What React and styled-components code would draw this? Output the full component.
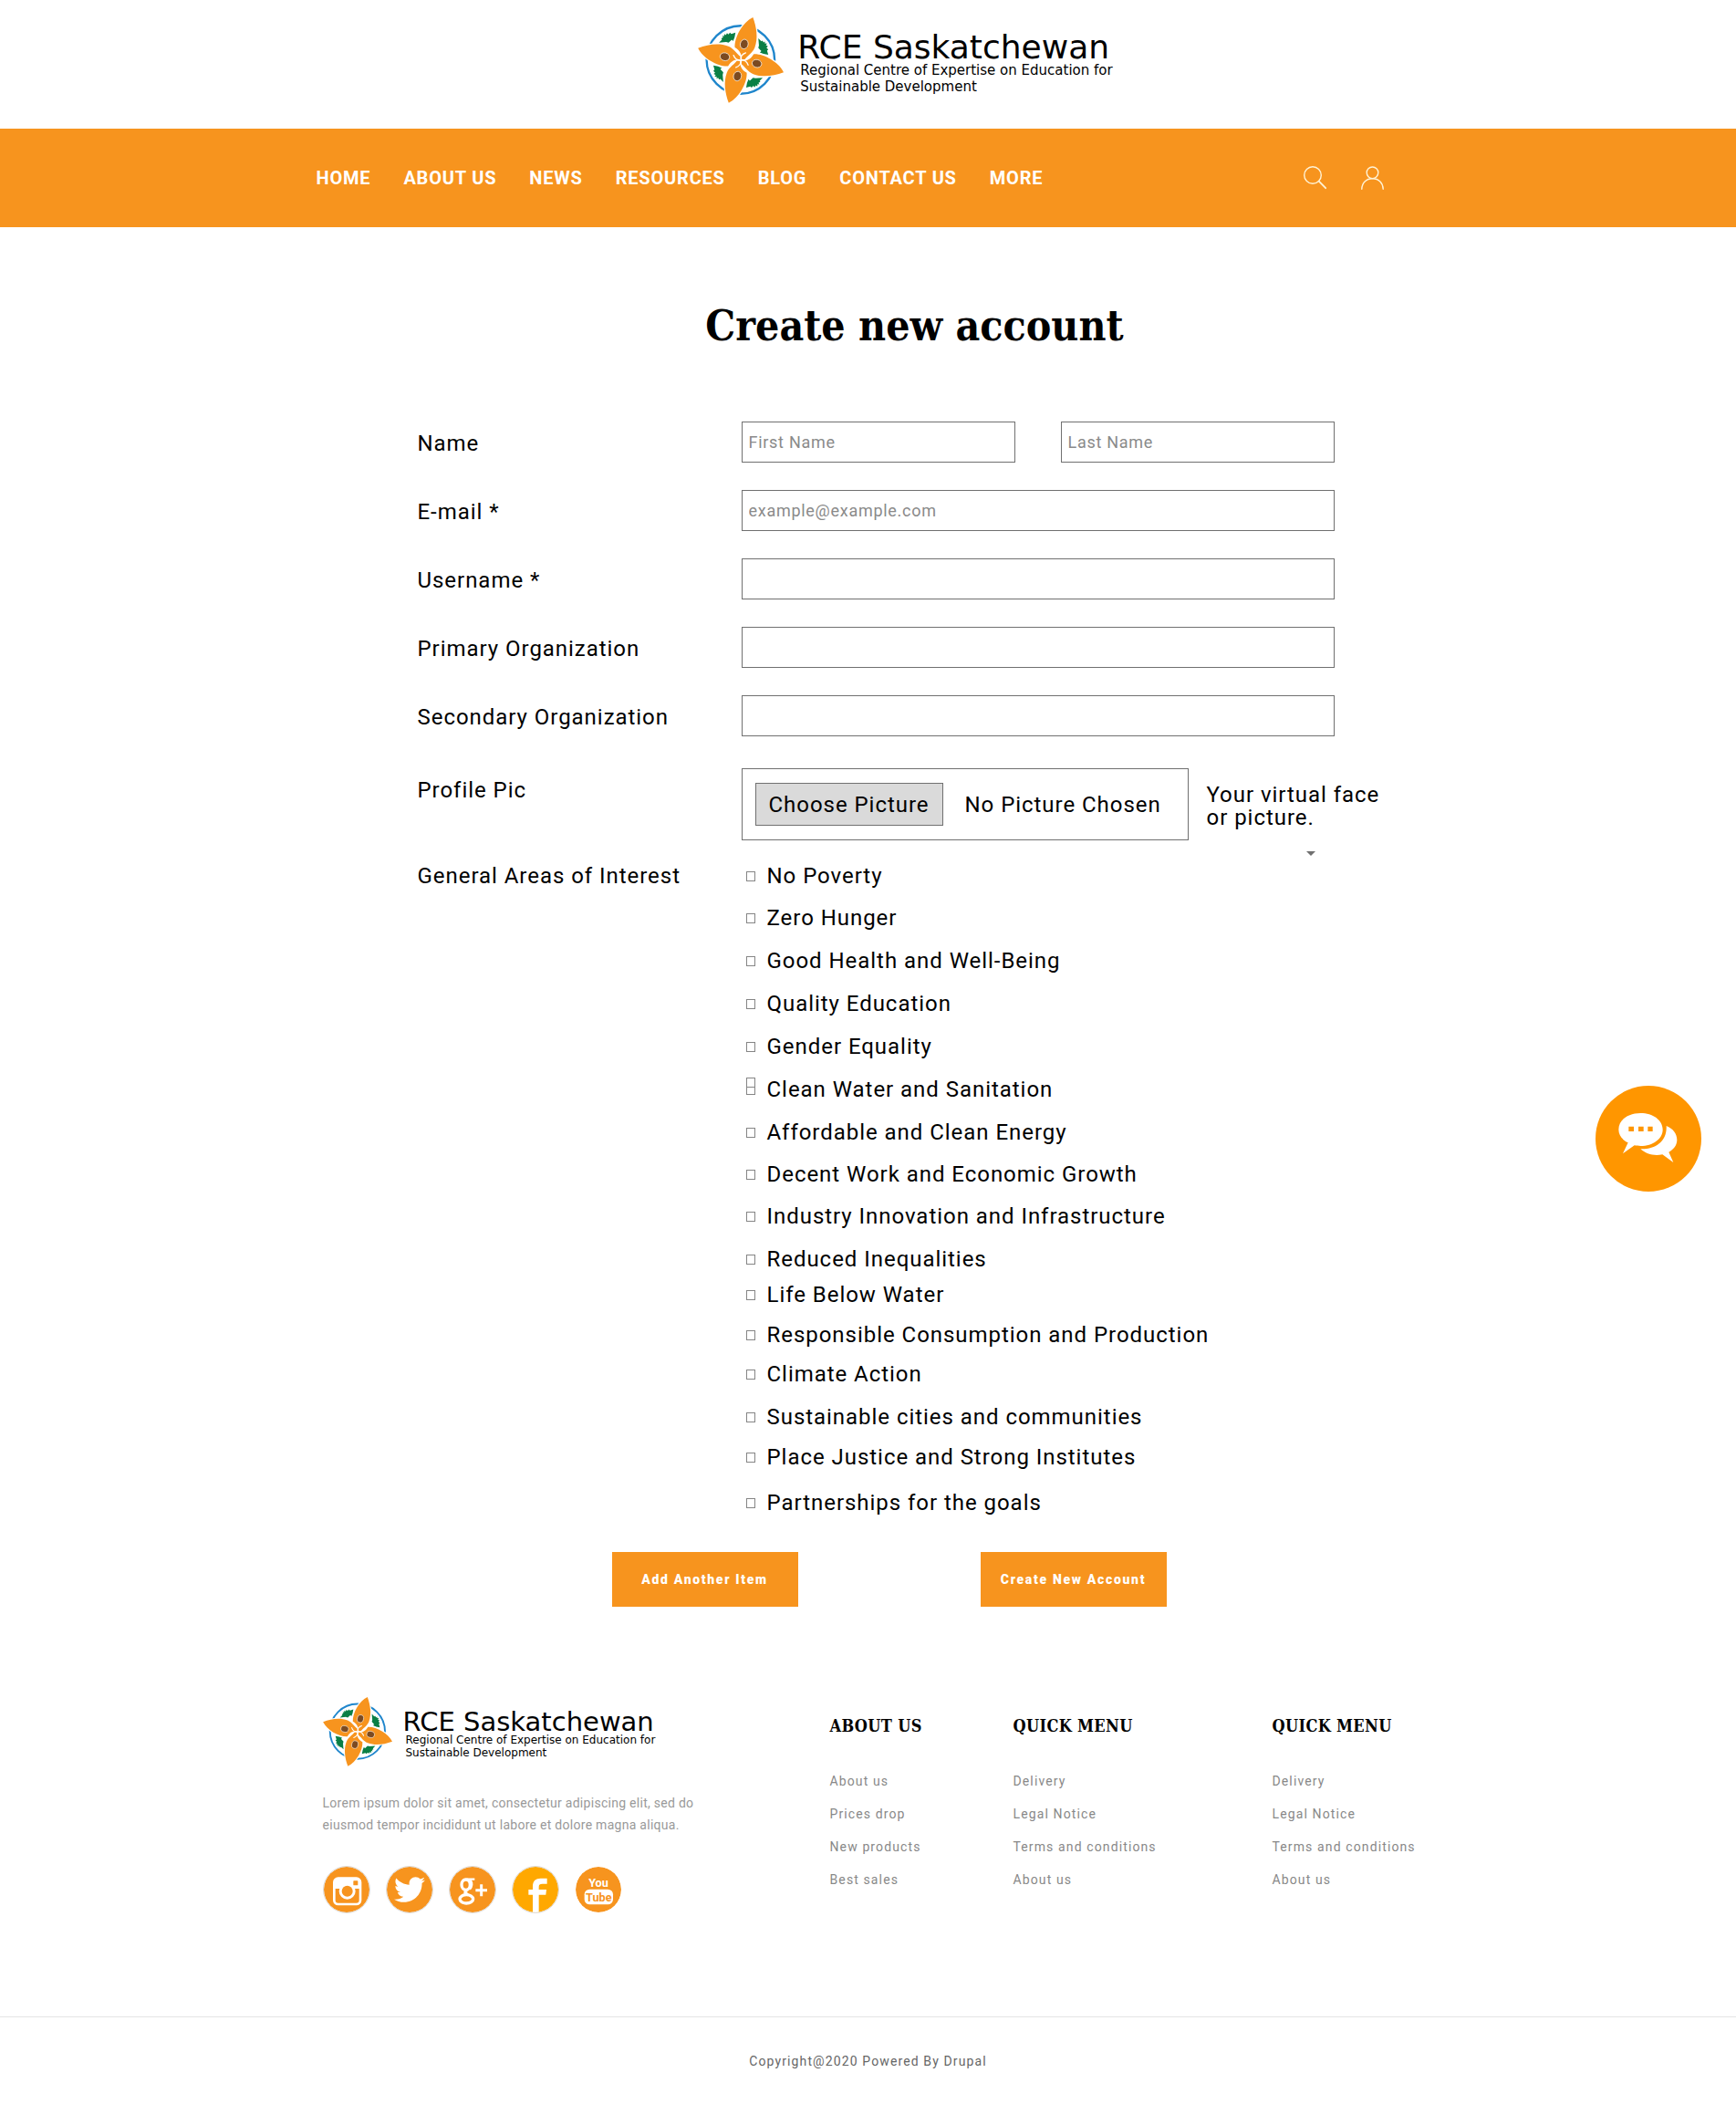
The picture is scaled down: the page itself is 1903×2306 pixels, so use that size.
import React, { useRef, useState } from "react";
import styled, { createGlobalStyle } from "styled-components";
import { FaTwitter } from "react-icons/fa";

const orange = "#f7941e";

const GlobalStyle = createGlobalStyle`
  *, *::before, *::after { box-sizing: border-box; }
  body {
    margin: 0;
    background: #fff;
    color: #000;
    font-family: Roboto, "Liberation Sans", sans-serif;
  }
  ul { list-style: none; margin: 0; padding: 0; }
  h1, h2, p { margin: 0; }
  a { color: inherit; text-decoration: none; }
  button, input { font: inherit; letter-spacing: inherit; color: inherit; }
`;

const Page = styled.div`
  position: relative;
`;

const Container = styled.div`
  width: 100%;
  max-width: 1210px;
  margin: 0 auto;
`;

/* ---------- Brand ---------- */

const BrandLink = styled.a`
  display: flex;
  align-items: flex-start;
  gap: ${(p) => (p.$small ? 12 : 15)}px;
  font-family: "DejaVu Sans", Verdana, sans-serif;

  svg {
    display: block;
    flex: none;
    width: ${(p) => (p.$small ? 76 : 94)}px;
    height: ${(p) => (p.$small ? 76 : 94)}px;
  }
`;

const BrandText = styled.span`
  display: flex;
  flex-direction: column;
  padding-top: ${(p) => (p.$small ? 14 : 17)}px;
  white-space: nowrap;
`;

const BrandName = styled.span`
  font-size: ${(p) => (p.$small ? 29 : 36)}px;
  line-height: ${(p) => (p.$small ? 26 : 32)}px;
`;

const BrandTagline = styled.span`
  padding-left: 3px;
  font-size: ${(p) => (p.$small ? 12 : 15)}px;
  line-height: ${(p) => (p.$small ? 14 : 18)}px;
`;

const turns = [0, 90, 180, 270];

function Emblem() {
  return (
    <svg viewBox="26 25 285 285" aria-hidden="true">
      <circle cx="168" cy="166" r="113" fill="none" stroke="#1f86cc" strokeWidth="7" />
      {turns.map((t) => (
        <g key={t} transform={`rotate(${t} 168.75 167.25)`}>
          <path
            d="M96 109 L106 99 L104 95 L110 92 L107 86 L113 88 L114 80 L119 84 L123 77 L127 82 L133 76 L137 80 L151 76 L148 92 L143 104 L139 99 L128 109 L120 107 Z"
            fill="#0a7f45"
          />
        </g>
      ))}
      {turns.map((t) => (
        <g key={t} transform={`rotate(${t} 168.75 167.25)`}>
          <path
            d="M209 25 C221 58 227 94 215 126 C207 145 190 153 181 166 L169 167 C175 152 166 134 149 125 C147 92 174 42 209 25 Z"
            fill={orange}
            stroke="#fff"
            strokeWidth="8"
            strokeLinejoin="round"
            paintOrder="stroke"
          />
        </g>
      ))}
      {turns.map((t) => (
        <g key={t} transform={`rotate(${t} 168.75 167.25)`}>
          <path d="M169 165 C168 155 174 147 185 143" fill="none" stroke="#fff" strokeWidth="4" strokeLinecap="round" />
          <ellipse cx="180" cy="114" rx="13" ry="16" transform="rotate(14 180 114)" fill="#7b4a21" stroke="#fff" strokeWidth="2" />
        </g>
      ))}
    </svg>
  );
}

function Brand({ small }) {
  return (
    <BrandLink href="#home" $small={small}>
      <Emblem />
      <BrandText $small={small}>
        <BrandName $small={small}>RCE Saskatchewan</BrandName>
        <BrandTagline $small={small}>
          Regional Centre of Expertise on Education for
          <br />
          Sustainable Development
        </BrandTagline>
      </BrandText>
    </BrandLink>
  );
}

/* ---------- Header and navigation ---------- */

const Header = styled.header`
  display: flex;
  justify-content: center;
  padding: 19px 0 28px 82px;
`;

const NavBar = styled.nav`
  background: ${orange};
  color: #fff;
`;

const NavInner = styled(Container)`
  display: flex;
  align-items: center;
  justify-content: space-between;
  height: 108px;
  padding-right: 40px;
`;

const NavList = styled.ul`
  display: flex;
  gap: 36px;
  font-size: 20px;
  line-height: 24px;
  font-weight: 700;
  letter-spacing: 0.04em;
  white-space: nowrap;
`;

const NavTools = styled.div`
  display: flex;
  gap: 38px;
`;

const IconButton = styled.button`
  display: block;
  padding: 0;
  border: 0;
  background: none;
  cursor: pointer;

  svg {
    display: block;
    width: 25px;
    height: 26px;
    fill: none;
    stroke: #fff3d6;
    stroke-width: 1.4;
    stroke-linecap: round;
  }
`;

/* ---------- Form ---------- */

const Main = styled.main`
  padding-top: 80px;
`;

const Title = styled.h1`
  padding-left: 102px;
  text-align: center;
  font-family: "Roboto Slab", "DejaVu Serif Condensed", "DejaVu Serif", serif;
  font-stretch: condensed;
  font-size: 46px;
  line-height: 56px;
  font-weight: 700;
`;

const Form = styled.form`
  display: flex;
  flex-direction: column;
  padding: 77px 0 0 111px;
  font-size: 24px;
  line-height: 26px;
  letter-spacing: 0.04em;
`;

const Row = styled.div`
  display: grid;
  grid-template-columns: 355px minmax(0, 650px);
  align-items: center;
  margin-bottom: 30px;
`;

const RowLabel = styled.label`
  padding-top: 2px;
`;

const Fields = styled.div`
  display: flex;
  gap: 50px;
`;

const TextInput = styled.input`
  flex: 1;
  min-width: 0;
  height: 45px;
  padding: 0 7px;
  border: 1px solid #707070;
  border-radius: 0;
  background: #fff;
  font-size: 18px;
  letter-spacing: 0.04em;

  &::placeholder {
    color: #8a8a8a;
    opacity: 1;
  }
`;

const ProfileRow = styled.div`
  display: grid;
  grid-template-columns: 355px 490px 1fr;
  align-items: start;
  padding-top: 5px;
`;

const ProfileLabel = styled.label`
  padding-top: 11px;
`;

const PictureBox = styled.div`
  display: flex;
  align-items: center;
  gap: 24px;
  height: 79px;
  padding-left: 14px;
  border: 1px solid #707070;
  white-space: nowrap;
`;

const PictureButton = styled.button`
  width: 206px;
  height: 47px;
  padding: 0;
  border: 1px solid #707070;
  background: #dadada;
  cursor: pointer;
`;

const HiddenFile = styled.input`
  display: none;
`;

const Helper = styled.div`
  padding: 17px 0 0 20px;
  line-height: 25px;
  white-space: nowrap;
`;

const Caret = styled.div`
  width: 10px;
  margin: 24px 0 0 109px;
  border: 5px solid transparent;
  border-top-color: #707070;
  border-bottom: 0;
`;

const Interests = styled.fieldset`
  display: grid;
  grid-template-columns: 355px 1fr;
  min-width: 0;
  margin: 0;
  padding: 9px 0 0;
  border: 0;
`;

const InterestItem = styled.li`
  display: flex;
  align-items: flex-start;
  height: ${(p) => p.$pitch}px;
  padding-left: 5px;
`;

const InterestLabel = styled.label`
  display: flex;
  align-items: center;
  gap: 13px;
  white-space: nowrap;
`;

const TickSlot = styled.span`
  position: relative;
  display: flex;
`;

const Tick = styled.input`
  appearance: none;
  width: 10px;
  height: 11px;
  margin: 0;
  border: 1px solid #858585;
  border-radius: 0;
  background: #fff;

  &:checked {
    background: ${orange};
  }
`;

const StackedTick = styled(Tick)`
  position: absolute;
  left: 0;
  bottom: 8px;
`;

const Actions = styled.div`
  display: flex;
  gap: 200px;
  padding: 41px 0 0 213px;
`;

const ActionButton = styled.button`
  width: 204px;
  height: 60px;
  padding: 0;
  border: 0;
  background: ${orange};
  color: #fff;
  font-size: 14px;
  font-weight: 900;
  letter-spacing: 0.12em;
  cursor: pointer;
`;

/* ---------- Footer ---------- */

const Footer = styled.footer`
  padding-top: 99px;
`;

const FooterGrid = styled(Container)`
  display: grid;
  grid-template-columns: 556px 201px 284px 1fr;
  align-items: start;
  padding: 0 0 113px 7px;
`;

const Blurb = styled.p`
  padding-top: 28px;
  color: #999;
  font-size: 14px;
  line-height: 24px;
  letter-spacing: 0.02em;
`;

const Socials = styled.ul`
  display: flex;
  gap: 17px;
  padding-top: 33px;
`;

const SocialLink = styled.a`
  display: flex;
  align-items: center;
  justify-content: center;
  width: 52px;
  height: 52px;
  border: 1px solid ${(p) => (p.$plain ? "#fff" : "#dedad6")};
  border-radius: 50%;
  background: ${(p) => p.$fill || orange};
  background-clip: padding-box;
  color: #fff;
  overflow: hidden;

  svg {
    display: block;
    flex: none;
  }
`;

const FooterColumn = styled.div`
  padding-top: 20px;
  white-space: nowrap;
`;

const FooterHeading = styled.h2`
  font-family: "Roboto Slab", "DejaVu Serif Condensed", "DejaVu Serif", serif;
  font-stretch: condensed;
  font-size: 18px;
  line-height: 24px;
  font-weight: 700;
  letter-spacing: 0.02em;
`;

const FooterLinks = styled.ul`
  padding-top: 30px;
  color: #888;
  font-size: 14px;
  line-height: 36px;
  letter-spacing: 0.08em;
`;

const Copyright = styled.p`
  border-top: 1px solid #e5e5e5;
  padding: 37px 0 35px;
  text-align: center;
  color: #666;
  font-size: 14px;
  line-height: 22px;
  letter-spacing: 0.08em;
`;

/* ---------- Chat bubble ---------- */

const ChatButton = styled.button`
  position: absolute;
  top: 1190px;
  right: 38px;
  width: 116px;
  height: 116px;
  padding: 0;
  border: 0;
  border-radius: 50%;
  background: #ff9600;
  cursor: pointer;

  svg {
    display: block;
    width: 116px;
    height: 116px;
  }
`;

/* ---------- Data ---------- */

const navItems = ["HOME", "ABOUT US", "NEWS", "RESOURCES", "BLOG", "CONTACT US", "MORE"];

const textRows = [
  { id: "email", label: "E-mail *", type: "email", placeholder: "example@example.com" },
  { id: "username", label: "Username *", type: "text" },
  { id: "primary", label: "Primary Organization", type: "text" },
  { id: "secondary", label: "Secondary Organization", type: "text" },
];

const interests = [
  { name: "No Poverty", pitch: 46 },
  { name: "Zero Hunger", pitch: 47 },
  { name: "Good Health and Well-Being", pitch: 47 },
  { name: "Quality Education", pitch: 47 },
  { name: "Gender Equality", pitch: 47 },
  { name: "Clean Water and Sanitation", pitch: 47, stacked: true },
  { name: "Affordable and Clean Energy", pitch: 46 },
  { name: "Decent Work and Economic Growth", pitch: 46 },
  { name: "Industry Innovation and Infrastructure", pitch: 47 },
  { name: "Reduced Inequalities", pitch: 39 },
  { name: "Life Below Water", pitch: 44 },
  { name: "Responsible Consumption and Production", pitch: 43 },
  { name: "Climate Action", pitch: 47 },
  { name: "Sustainable cities and communities", pitch: 44 },
  { name: "Place Justice and Strong Institutes", pitch: 50 },
  { name: "Partnerships for the goals", pitch: 26 },
];

const footerColumns = [
  { title: "ABOUT US", links: ["About us", "Prices drop", "New products", "Best sales"] },
  { title: "QUICK MENU", links: ["Delivery", "Legal Notice", "Terms and conditions", "About us"] },
  { title: "QUICK MENU", links: ["Delivery", "Legal Notice", "Terms and conditions", "About us"] },
];

/* ---------- Social glyphs ---------- */

function InstagramGlyph() {
  return (
    <svg width="50" height="50" viewBox="0 0 150 150">
      <rect x="34" y="38" width="86" height="85" rx="13" fill="none" stroke="#fff" strokeWidth="8" />
      <path d="M34 72 V50 a12 12 0 0 1 12 -12 H108 a12 12 0 0 1 12 12 V72 Z" fill="#fff" />
      <circle cx="77" cy="80" r="27" fill="#fff" />
      <circle cx="77" cy="80" r="18" fill={orange} />
      <rect x="97" y="46" width="15" height="15" rx="2" fill={orange} />
    </svg>
  );
}

function GooglePlusGlyph() {
  return (
    <svg width="50" height="50" viewBox="0 0 150 150" fill="none" stroke="#fff">
      <ellipse cx="53" cy="59" rx="14" ry="17" strokeWidth="10" />
      <path d="M55 41 H82 M68 44 C75 53 74 66 66 74" strokeWidth="7" />
      <path d="M57 77 C46 84 52 88 60 92" strokeWidth="10" />
      <ellipse cx="55" cy="106" rx="22" ry="14" strokeWidth="10" />
      <path d="M85 77 H123 M104 58 V97" strokeWidth="9" />
    </svg>
  );
}

function FacebookGlyph() {
  return (
    <svg width="50" height="50" viewBox="0 0 150 150">
      <path
        d="M66 152 V92 H52 V75 H66 V64 C66 46 76 38 92 38 H113 V56 H98 C89 56 86 59 86 66 V75 H111 L109 92 H86 V152 Z"
        fill="#fff"
      />
    </svg>
  );
}

const GlyphText = styled.text`
  font-family: "Liberation Sans Narrow", "Roboto", sans-serif;
  font-size: 38px;
  font-weight: 700;
  text-anchor: middle;
`;

function YouTubeGlyph() {
  return (
    <svg width="50" height="50" viewBox="0 0 150 150">
      <GlyphText x="75" y="66" fill="#fff">You</GlyphText>
      <rect x="29" y="74" width="94" height="50" rx="17" fill="#fff" />
      <GlyphText x="76" y="113" fill={orange}>Tube</GlyphText>
    </svg>
  );
}

export default function App() {
  const fileRef = useRef(null);
  const [fileName, setFileName] = useState("");

  return (
    <Page>
      <GlobalStyle />

      <Header>
        <Brand />
      </Header>

      <NavBar>
        <NavInner>
          <NavList>
            {navItems.map((item) => (
              <li key={item}>
                <a href="#nav">{item}</a>
              </li>
            ))}
          </NavList>
          <NavTools>
            <IconButton type="button" aria-label="Search">
              <svg viewBox="0 0 25 26">
                <circle cx="10" cy="10" r="9.3" />
                <path d="M16.8 16.7 L24.2 24.2" strokeWidth="1.8" />
              </svg>
            </IconButton>
            <IconButton type="button" aria-label="Account">
              <svg viewBox="0 0 25 26">
                <circle cx="12.5" cy="7.3" r="6.3" />
                <path d="M0.8 25.2 C1 18.5 5.5 13.8 12.5 13.8 C19.5 13.8 24 18.5 24.2 25.2" />
              </svg>
            </IconButton>
          </NavTools>
        </NavInner>
      </NavBar>

      <Main>
        <Container>
          <Title>Create new account</Title>

          <Form onSubmit={(e) => e.preventDefault()}>
            <Row>
              <RowLabel htmlFor="first-name">Name</RowLabel>
              <Fields>
                <TextInput id="first-name" type="text" placeholder="First Name" />
                <TextInput id="last-name" type="text" placeholder="Last Name" aria-label="Last Name" />
              </Fields>
            </Row>
            {textRows.map((row) => (
              <Row key={row.id}>
                <RowLabel htmlFor={row.id}>{row.label}</RowLabel>
                <Fields>
                  <TextInput id={row.id} type={row.type} placeholder={row.placeholder} />
                </Fields>
              </Row>
            ))}

            <ProfileRow>
              <ProfileLabel htmlFor="picture">Profile Pic</ProfileLabel>
              <PictureBox>
                <PictureButton type="button" onClick={() => fileRef.current.click()}>
                  Choose Picture
                </PictureButton>
                <HiddenFile
                  id="picture"
                  ref={fileRef}
                  type="file"
                  accept="image/*"
                  onChange={(e) => setFileName(e.target.files[0] ? e.target.files[0].name : "")}
                />
                <span>{fileName || "No Picture Chosen"}</span>
              </PictureBox>
              <Helper>
                Your virtual face
                <br />
                or picture.
                <Caret />
              </Helper>
            </ProfileRow>

            <Interests aria-labelledby="interests-label">
              <span id="interests-label">General Areas of Interest</span>
              <ul>
                {interests.map((it) => (
                  <InterestItem key={it.name} $pitch={it.pitch}>
                    <InterestLabel>
                      <TickSlot>
                        {it.stacked && <StackedTick type="checkbox" aria-label={it.name} />}
                        <Tick type="checkbox" aria-label={it.name} />
                      </TickSlot>
                      {it.name}
                    </InterestLabel>
                  </InterestItem>
                ))}
              </ul>
            </Interests>

            <Actions>
              <ActionButton type="button">Add Another Item</ActionButton>
              <ActionButton type="submit">Create New Account</ActionButton>
            </Actions>
          </Form>
        </Container>
      </Main>

      <Footer>
        <FooterGrid>
          <div>
            <Brand small />
            <Blurb>
              Lorem ipsum dolor sit amet, consectetur adipiscing elit, sed do
              <br />
              eiusmod tempor incididunt ut labore et dolore magna aliqua.
            </Blurb>
            <Socials>
              <li><SocialLink href="#instagram" aria-label="Instagram"><InstagramGlyph /></SocialLink></li>
              <li><SocialLink href="#twitter" aria-label="Twitter"><FaTwitter size={34} /></SocialLink></li>
              <li><SocialLink href="#google-plus" aria-label="Google Plus"><GooglePlusGlyph /></SocialLink></li>
              <li><SocialLink href="#facebook" aria-label="Facebook" $fill="#ffa800"><FacebookGlyph /></SocialLink></li>
              <li><SocialLink href="#youtube" aria-label="YouTube" $plain><YouTubeGlyph /></SocialLink></li>
            </Socials>
          </div>
          {footerColumns.map((col, i) => (
            <FooterColumn key={i}>
              <FooterHeading>{col.title}</FooterHeading>
              <FooterLinks>
                {col.links.map((link) => (
                  <li key={link}>
                    <a href="#footer">{link}</a>
                  </li>
                ))}
              </FooterLinks>
            </FooterColumn>
          ))}
        </FooterGrid>
        <Copyright>Copyright@2020 Powered By Drupal</Copyright>
      </Footer>

      <ChatButton type="button" aria-label="Chat">
        <svg viewBox="56 60 348 348" fill="#fff">
          <path d="M204 150 C245 150 277 173 277 204 C277 235 245 258 204 258 C198 258 190 257 184 256 L146 283 L163 247 C144 238 132 222 132 204 C132 173 163 150 204 150 Z" />
          <path d="M289 192 C311 201 324 217 324 238 C324 255 314 269 297 278 L312 312 L276 286 C248 292 222 284 204 268 C252 270 292 244 289 192 Z" />
          <path d="M165 194 h17 v16 h-17 Z M197 194 h17 v16 h-17 Z M228 194 h16 v16 h-16 Z" fill="#ff9600" />
        </svg>
      </ChatButton>
    </Page>
  );
}
